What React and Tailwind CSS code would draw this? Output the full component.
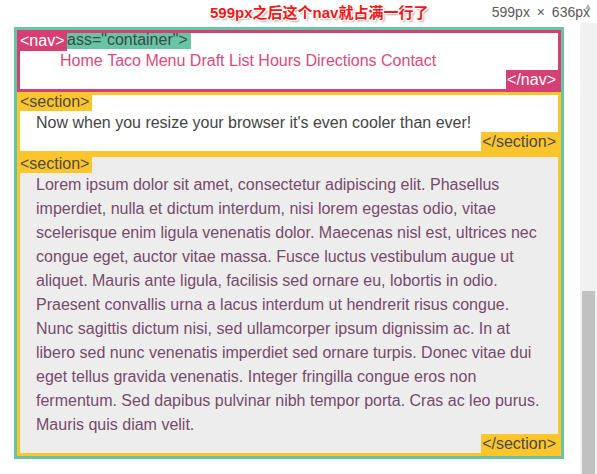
const navLinks = ['Home', 'Taco Menu', 'Draft List', 'Hours', 'Directions', 'Contact']

const lorem =
  'Lorem ipsum dolor sit amet, consectetur adipiscing elit. Phasellus imperdiet, nulla et dictum interdum, nisi lorem egestas odio, vitae scelerisque enim ligula venenatis dolor. Maecenas nisl est, ultrices nec congue eget, auctor vitae massa. Fusce luctus vestibulum augue ut aliquet. Mauris ante ligula, facilisis sed ornare eu, lobortis in odio. Praesent convallis urna a lacus interdum ut hendrerit risus congue. Nunc sagittis dictum nisi, sed ullamcorper ipsum dignissim ac. In at libero sed nunc venenatis imperdiet sed ornare turpis. Donec vitae dui eget tellus gravida venenatis. Integer fringilla congue eros non fermentum. Sed dapibus pulvinar nibh tempor porta. Cras ac leo purus. Mauris quis diam velit.'

function Section({ children, className }) {
  return (
    <section className={`relative border-[3px] border-[#fdc52c] p-4 leading-6 ${className}`}>
      <span className="absolute -top-[3px] -left-[3px] bg-[#fdc52c] px-[3px] leading-[19px] text-[#4a4a4a]">
        {'<section>'}
      </span>
      {children}
      <span className="absolute bottom-0 right-0 bg-[#fdc52c] pl-[1px] pr-[2px] leading-[19px] text-[#4a4a4a]">
        {'</section>'}
      </span>
    </section>
  )
}

export default function App() {
  return (
    <div className="relative w-[597px] h-[474px] overflow-hidden bg-white font-['Liberation_Sans',Arial,sans-serif] text-[16px]">
      {/* devtools-ish header */}
      <div className="flex items-start h-[23px]">
        <div className="ml-[210px] mt-[4px] text-[15px] leading-[18px] font-bold text-[#f21818] font-['Liberation_Sans','Noto_Sans_CJK_SC',sans-serif] [text-shadow:1px_1px_0_#fff,-1px_-1px_0_#fff,1px_-1px_0_#fff,-1px_1px_0_#fff,2px_2px_2px_#aaa]">
          599px之后这个nav就占满一行了
        </div>
        <div className="ml-auto mr-[7px] mt-[4px] text-[14px] leading-[16px] text-[#5a5a5a] [word-spacing:3px]">
          599px × 636px
        </div>
      </div>
      <svg className="absolute top-[4px] right-[6px]" width="6" height="6" viewBox="0 0 6 6">
        <path d="M3 0 L6 5 L0 5 Z" fill="#b5b5b5" />
      </svg>

      <div className="flex h-[451px]">
        <div className="w-[580px] pt-[4px] pl-[14px]">
          {/* container */}
          <div className="relative w-[550px] border-[3px] border-[#67c5a6] bg-white">
            {/* container label, its start is hidden behind the nav label */}
            <span className="absolute top-0 left-[50px] bg-[#67c5a6] pr-[3px] leading-[19px] text-[#3b4a45]">
              {'ass="container">'}
            </span>

            <nav className="relative border-[3px] border-[#d63f74]">
              <span className="absolute -top-[3px] -left-[3px] bg-[#d63f74] px-[3px] leading-[21px] text-white">
                {'<nav>'}
              </span>
              <ul className="my-4 pl-10 leading-6 text-[#d84a7e]">
                {navLinks.map((link) => (
                  <li key={link} className="inline">
                    {link}{' '}
                  </li>
                ))}
              </ul>
              <span className="absolute bottom-0 right-0 bg-[#d63f74] pl-[1px] pr-[2px] leading-[19px] text-white">
                {'</nav>'}
              </span>
            </nav>

            <Section className="bg-white text-[#454545]">
              Now when you resize your browser it's even cooler than ever!
            </Section>

            <Section className="bg-[#ededed] text-[#774a6b]">{lorem}</Section>
          </div>
        </div>

        {/* scrollbar */}
        <div className="w-[17px] bg-[#f1f1f1] pt-[268px] pl-[2px]">
          <div className="w-[13px] h-full bg-[#c1c1c1]" />
        </div>
      </div>
    </div>
  )
}
